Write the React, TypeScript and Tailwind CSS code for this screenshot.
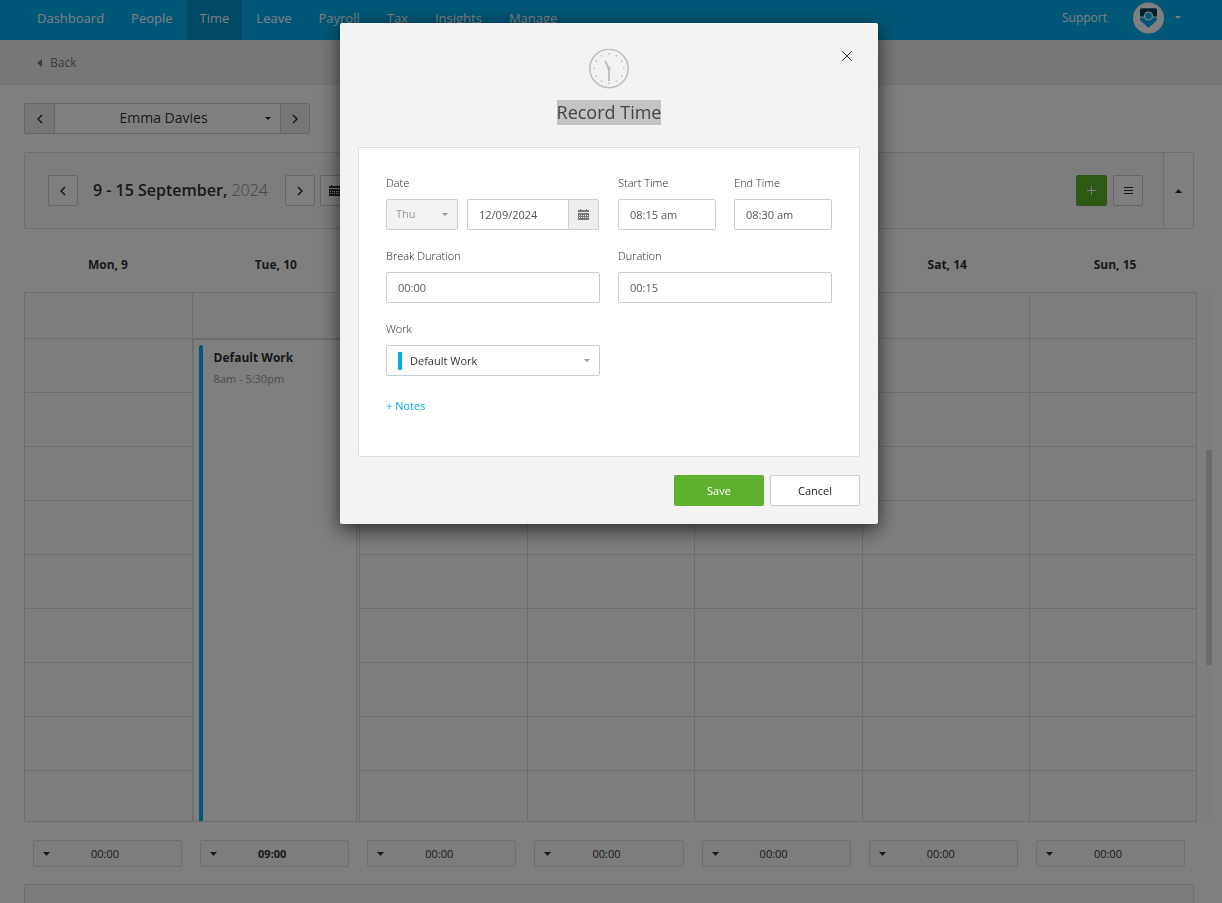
import React, { useState } from "react";

const navItems = ["Dashboard", "People", "Time", "Leave", "Payroll", "Tax", "Insights", "Manage"];
const days = [
  { name: "Mon, 9", total: "00:00" },
  { name: "Tue, 10", total: "09:00", event: { title: "Default Work", hours: "8am - 5:30pm" } },
  { name: "Wed, 11", total: "00:00" },
  { name: "Thu, 12", total: "00:00" },
  { name: "Fri, 13", total: "00:00" },
  { name: "Sat, 14", total: "00:00" },
  { name: "Sun, 15", total: "00:00" },
];

function Caret({ className = "" }: { className?: string }) {
  return (
    <svg aria-hidden="true" width="6" height="3" viewBox="0 0 6 3" className={className}>
      <path d="M0 0h6L3 3z" fill="currentColor" />
    </svg>
  );
}

function Chevron({ flip = false }: { flip?: boolean }) {
  return (
    <svg aria-hidden="true" width="6" height="10" viewBox="0 0 6 10" fill="none" stroke="currentColor" strokeWidth="1.500">
      <path d={flip ? "M1 1l4 4-4 4" : "M5 1L1 5l4 4"} />
    </svg>
  );
}

function CalendarIcon() {
  return (
    <svg aria-hidden="true" width="11" height="11" viewBox="0 0 11 11" fill="currentColor">
      <path d="M0 1h2V0h1v1h5V0h1v1h2v2H0z" />
      <path fillRule="evenodd" d="M0 4h11v7H0zM1 6v1h1V6zm2 0v1h1V6zm2 0v1h1V6zm2 0v1h1V6zm2 0v1h1V6zM1 8v1h1V8zm2 0v1h1V8zm2 0v1h1V8zm2 0v1h1V8zm2 0v1h1V8z" />
    </svg>
  );
}

function ClockIcon() {
  const ticks = [0, 30, 60, 90, 120, 150, 180, 210, 240, 270, 300, 330];
  return (
    <svg aria-hidden="true" width="40" height="40" viewBox="0 0 40 40" fill="none" stroke="#bdbdbd">
      <circle cx="20" cy="19.500" r="19.200" strokeWidth="1.500" />
      {ticks.map((t) => (
        <path key={t} d="M20 4v1.500" strokeWidth="1.500" transform={`rotate(${t} 20 19.500)`} />
      ))}
      <path d="M20 19.500v12.500M20 19.500l-4-7.500" strokeWidth="1.800" />
      <circle cx="20" cy="19.500" r="1.300" fill="#bdbdbd" />
    </svg>
  );
}

function Avatar() {
  return (
    <svg aria-hidden="true" width="32" height="32" viewBox="0 0 32 32">
      <circle cx="15.500" cy="16" r="15.500" fill="#fff" />
      <path d="M7 15.500h17v2.700L15.500 26 7 18.200z" fill="#00aeef" />
      <path d="M8.500 6.300h14a1.500 1.500 0 0 1 1.500 1.500v6.700H7V7.800a1.500 1.500 0 0 1 1.500-1.500z" fill="#00425c" />
      <circle cx="15.500" cy="14" r="3.900" fill="#00aeef" stroke="#fff" strokeWidth="1.300" />
    </svg>
  );
}

const field = "h-[31px] w-full rounded-[2px] border border-[#ccc] bg-white px-[11px] text-[11px] text-[#555] outline-none";
const label = "mb-2 block text-[11px] leading-4 font-light text-[#222]";
const square = "flex h-[31px] w-[30px] items-center justify-center rounded-[2px] border border-[#ccc] bg-white";

function TextField({ id, title, initial }: { id: string; title: string; initial: string }) {
  const [value, setValue] = useState(initial);
  return (
    <div className="min-w-0">
      <label htmlFor={id} className={label}>{title}</label>
      <input id={id} value={value} onChange={(e) => setValue(e.target.value)} className={field} />
    </div>
  );
}

function RecordTimeDialog() {
  const [date, setDate] = useState("12/09/2024");
  return (
    <div className="fixed inset-0 flex items-start justify-center bg-black/50 pt-[23px] pr-1">
      <div role="dialog" aria-modal="true" aria-labelledby="dialog-title" className="relative w-[538px] rounded-[2px] bg-[#f3f3f3] px-[18px] pb-[18px] shadow-[0_5px_20px_rgba(0,0,0,0.7)]">
        <button aria-label="Close" className="absolute top-[26px] right-[24px] p-px text-[#333]">
          <svg width="12" height="12" viewBox="0 0 12 12" stroke="currentColor">
            <path d="M1 1l10 10M11 1L1 11" />
          </svg>
        </button>
        <header className="flex flex-col items-center pt-[26px]">
          <ClockIcon />
          <h1 id="dialog-title" className="mt-[11px] bg-[#c3c3c3] text-[18px] leading-[25px] text-[#444]">Record Time</h1>
        </header>
        <form>
          <div className="mt-[22px] grid h-[310px] grid-cols-2 content-start gap-x-[18px] gap-y-[18px] rounded-[2px] border border-[#ddd] bg-white px-[27px] pt-[27px]">
            <div>
              <label htmlFor="date" className={label}>Date</label>
              <div className="flex pr-px">
                <div className="relative mr-[9px] w-[72px] text-[#999]">
                  <select aria-label="Day" disabled className="h-[31px] w-full appearance-none rounded-[2px] border border-[#ccc] bg-[#f3f3f3] px-[9px] text-[11px] text-[#999] opacity-100">
                    <option>Thu</option>
                  </select>
                  <Caret className="pointer-events-none absolute top-[14px] right-[10px]" />
                </div>
                <input id="date" value={date} onChange={(e) => setDate(e.target.value)} className="h-[31px] min-w-0 flex-1 rounded-l-[2px] border border-[#ccc] px-[11px] text-[11px] text-[#555] outline-none" />
                <button type="button" aria-label="Open calendar" className="flex h-[31px] w-[30px] items-center justify-center rounded-r-[2px] border border-l-0 border-[#ccc] bg-[#eee] text-[#777]">
                  <CalendarIcon />
                </button>
              </div>
            </div>
            <div className="grid grid-cols-2 gap-[18px]">
              <TextField id="start" title="Start Time" initial="08:15 am" />
              <TextField id="end" title="End Time" initial="08:30 am" />
            </div>
            <TextField id="break" title="Break Duration" initial="00:00" />
            <TextField id="duration" title="Duration" initial="00:15" />
            <div>
              <label htmlFor="work" className={label}>Work</label>
              <div className="relative">
                <select id="work" className="h-[31px] w-full appearance-none rounded-[2px] border border-[#ccc] bg-white pt-px pr-6 pl-[23px] text-[11px] text-[#333]">
                  <option>Default Work</option>
                </select>
                <span className="pointer-events-none absolute top-[7px] left-[12px] h-[18px] w-1 rounded-[1px] bg-[#00aeef]" />
                <Caret className="pointer-events-none absolute top-[14px] right-[10px] text-[#999]" />
              </div>
            </div>
            <a href="#notes" className="col-span-2 mt-1 text-[11px] leading-4 text-[#00aeef]">+ Notes</a>
          </div>
          <div className="mt-[18px] flex justify-end gap-[6px] text-[11px]">
            <button type="button" className="h-[31px] w-[90px] rounded-[2px] bg-[#5eb12e] pt-px text-white">Save</button>
            <button type="button" className="h-[31px] w-[90px] rounded-[2px] border border-[#ccc] bg-white pt-px text-[#222]">Cancel</button>
          </div>
        </form>
      </div>
    </div>
  );
}

function DayColumn({ event, last }: { event?: { title: string; hours: string }; last: boolean }) {
  return (
    <div className={`relative border-l border-[#dcdcdc] ${last ? "border-r" : ""}`}>
      <div className="h-[46px] border-t border-[#dcdcdc]" />
      {Array.from({ length: 8 }, (_, i) => (
        <div key={i} className="h-[54px] border-t border-[#dcdcdc]" />
      ))}
      <div className="h-[51px] border-t border-[#dcdcdc]" />
      {event && (
        <div className="absolute top-[47px] right-[2px] bottom-0 left-0 flex gap-[11px] border border-b-0 border-[#dcdcdc] bg-white pt-[5px] pl-[5px]">
          <span className="w-1 rounded-t-[2px] bg-[#00aeef]" />
          <div className="pt-[5px]">
            <p className="text-[12px] leading-4 font-bold">{event.title}</p>
            <p className="mt-[5px] text-[11px] leading-4 text-[#999]">{event.hours}</p>
          </div>
        </div>
      )}
    </div>
  );
}

export default function App() {
  return (
    <div className="flex h-screen flex-col overflow-hidden bg-white font-['Open_Sans',sans-serif] text-[#333]">
      <header className="flex h-10 shrink-0 items-center bg-[#00aeef] pl-6 text-[13px] text-white">
        <nav className="flex h-full flex-1 gap-px">
          {navItems.map((item) => (
            <a key={item} href={`#${item.toLowerCase()}`} className={`flex h-full items-center px-[13px] pb-[2px] ${item === "Time" ? "bg-[#0094cc]" : ""}`}>
              {item}
            </a>
          ))}
        </nav>
        <a href="#support" className="mr-[26px] pb-1 text-[12px]">Support</a>
        <button aria-label="Account" className="mr-[41px] flex items-center gap-[10px] pb-[5px]">
          <Avatar />
          <Caret />
        </button>
      </header>
      <div className="h-[45px] shrink-0 border-b border-[#e9e9e9] bg-[#f0f0f0] pl-[37px]">
        <a href="#back" className="flex h-[45px] w-fit items-center gap-2 text-[12px] text-[#777]">
          <svg aria-hidden="true" width="5" height="8" viewBox="0 0 5 8"><path d="M5 0v8L0 4z" fill="currentColor" /></svg>
          Back
        </a>
      </div>
      <main className="flex flex-1 flex-col pt-[18px] pl-6">
        <div className="flex h-[31px] w-[286px] shrink-0 rounded-[2px] border border-[#ccc]">
          <button aria-label="Previous person" className="flex w-[30px] items-center justify-center border-r border-[#ccc] bg-[#eee]"><Chevron /></button>
          <div className="relative flex-1">
            <select aria-label="Person" className="h-full w-full appearance-none pr-4 pb-[2px] pl-2 text-[14px] [text-align-last:center]">
              <option>Emma Davies</option>
            </select>
            <Caret className="pointer-events-none absolute top-[13px] right-[9px]" />
          </div>
          <button aria-label="Next person" className="flex w-[29px] items-center justify-center border-l border-[#ccc] bg-[#eee]"><Chevron flip /></button>
        </div>

        <section className="mt-[18px] mr-7 flex h-[77px] shrink-0 items-center rounded-[2px] border border-[#dcdcdc] bg-[#fafafa] pl-[23px]">
          <button aria-label="Previous week" className={square}><Chevron /></button>
          <h2 className="mr-[17px] ml-[15px] pb-[2px] text-[16px] leading-6 font-semibold whitespace-nowrap">
            9 - 15 September, <span className="font-light text-[#888]">2024</span>
          </h2>
          <button aria-label="Next week" className={square}><Chevron flip /></button>
          <button aria-label="Pick week" className={`${square} ml-[5px]`}><CalendarIcon /></button>
          <button aria-label="Add time" className="ml-auto flex h-[31px] w-[31px] items-center justify-center rounded-[2px] bg-[#5eb12e] text-white">
            <svg aria-hidden="true" width="9" height="9" viewBox="0 0 9 9" stroke="currentColor"><path d="M4.500 0v9M0 4.500h9" /></svg>
          </button>
          <button aria-label="List view" className={`${square} ml-[6px]`}>
            <svg aria-hidden="true" width="9" height="8" viewBox="0 0 9 8" stroke="currentColor"><path d="M0 .5h9M0 3.500h9M0 6.500h9" /></svg>
          </button>
          <button aria-label="Collapse" className="ml-5 flex h-full w-[30px] items-center justify-center border-l border-[#dcdcdc] bg-white">
            <svg aria-hidden="true" width="7" height="4" viewBox="0 0 7 4"><path d="M0 4h7L3.500 0z" fill="currentColor" /></svg>
          </button>
        </section>

        <div className="mt-[26px] mr-[23px] grid shrink-0 grid-cols-7 text-center text-[12px] leading-5 font-bold">
          {days.map((d) => <h3 key={d.name}>{d.name}</h3>)}
        </div>

        <div className="mt-[17px] mr-[10px] flex shrink-0 gap-[9px]">
          <div className="grid flex-1 grid-cols-7 border-b border-[#dcdcdc] bg-[#fcfcfc]">
            {days.map((d, i) => <DayColumn key={d.name} event={d.event} last={i === days.length - 1} />)}
          </div>
          <div className="w-[6px] bg-[#fafafa] pt-[158px]">
            <div className="h-[215px] bg-[#d6d6d6]" />
          </div>
        </div>

        <div className="mt-[18px] mr-7 grid shrink-0 grid-cols-7">
          {days.map((d) => (
            <div key={d.name} className="px-[9px]">
              <button className={`flex h-[27px] w-full items-center rounded-[2px] border border-[#dcdcdc] bg-[#fafafa] px-[9px] text-[11px] ${d.event ? "font-bold" : ""}`}>
                <svg aria-hidden="true" width="7" height="4" viewBox="0 0 7 4"><path d="M0 0h7L3.500 4z" fill="currentColor" /></svg>
                <span className="flex-1 pt-[2px] pr-3 text-center">{d.total}</span>
              </button>
            </div>
          ))}
        </div>

        <section aria-label="Summary" className="mt-[17px] mr-7 flex-1 rounded-t-[2px] border border-b-0 border-[#dcdcdc] bg-[#f6f6f6]" />
      </main>
      <RecordTimeDialog />
    </div>
  );
}
